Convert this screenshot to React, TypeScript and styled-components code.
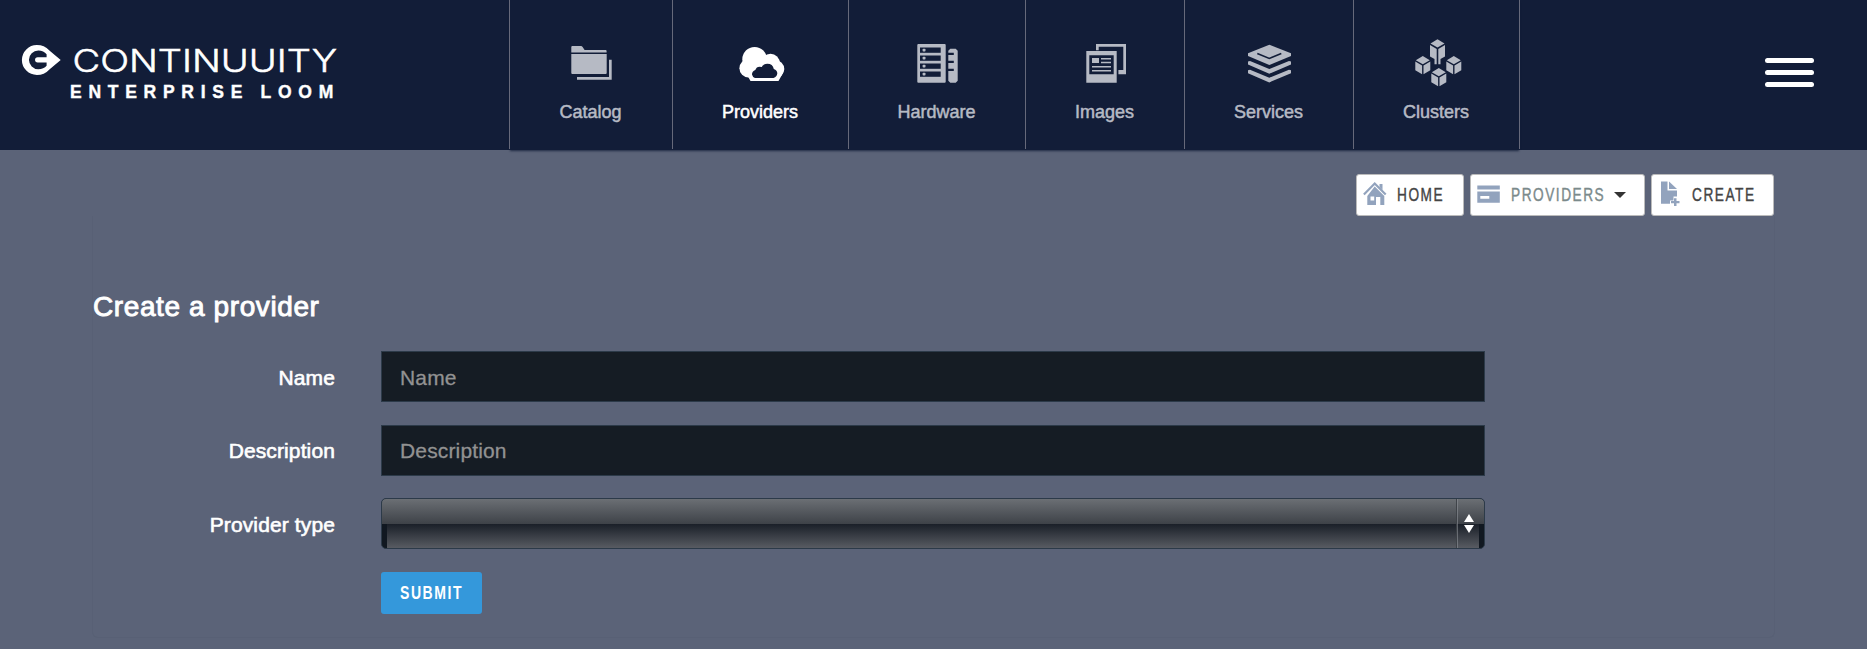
import React from "react";
import styled, { createGlobalStyle } from "styled-components";

const NAVY = "#121d38";

const GlobalStyle = createGlobalStyle`
  * { box-sizing: border-box; }
  body {
    margin: 0;
    background: #5b6378;
    font-family: "Liberation Sans", Arial, Helvetica, sans-serif;
    color: #fff;
  }
`;

const Page = styled.div`
  height: 649px;
  overflow: hidden;
`;

const Header = styled.header`
  display: flex;
  height: 150px;
  background: ${NAVY};
`;

const Brand = styled.a`
  flex: 0 0 509px;
  padding: 40px 0 0 20px;
`;

const Nav = styled.nav`
  display: flex;
  height: 150px;
  background: linear-gradient(#66697a, #66697a) no-repeat right top / 1px 149px;
  padding-right: 1px;
  box-shadow: 0 2px 2px -1px rgba(18, 29, 56, 0.8);
`;

const NavItem = styled.a<{ $width: number; $active?: boolean }>`
  width: ${(p) => p.$width}px;
  padding: 38px 0 0 1px;
  display: flex;
  flex-direction: column;
  align-items: center;
  background: linear-gradient(#66697a, #66697a) no-repeat left top / 1px 149px;
  color: ${(p) => (p.$active ? "#fff" : "#b6bac4")};
  font-size: 18px;
  line-height: 20px;
  -webkit-text-stroke: 0.5px currentColor;

  svg { display: block; margin-bottom: 14px; stroke-width: 0; }
`;

const NavLabel = styled.span`
  padding-right: 1px;
`;

const MenuButton = styled.button`
  margin: 57px 52px 0 auto;
  width: 50px;
  height: 32px;
  padding: 1px 0;
  border: 0;
  background: none;
  display: flex;
  flex-direction: column;
  gap: 7px;
`;

const MenuBar = styled.span`
  width: 49px;
  height: 5px;
  border-radius: 2.5px;
  background: #fff;
`;

const Crumbs = styled.div`
  display: flex;
  justify-content: flex-end;
  gap: 6px;
  padding: 24px 93px 0 0;
`;

const Crumb = styled.a<{ $width: number; $muted?: boolean }>`
  width: ${(p) => p.$width}px;
  height: 42px;
  padding-left: 6px;
  display: flex;
  align-items: center;
  background: #fff;
  border: 1px solid #bbb;
  border-radius: 3px;
  color: ${(p) => (p.$muted ? "#7b8a8b" : "#444")};
  font-size: 18px;

  svg { flex: none; margin-bottom: 4px; }
`;

const Condensed = styled.span<{ $width: number; $left?: number; $bold?: boolean }>`
  display: block;
  flex: none;
  width: ${(p) => p.$width}px;
  margin-left: ${(p) => p.$left ?? 0}px;
  white-space: nowrap;
  text-align: left;
  font-weight: ${(p) => (p.$bold ? 700 : 400)};
  letter-spacing: 2px;
  -webkit-text-stroke: ${(p) => (p.$bold ? 0 : 0.4)}px currentColor;
  transform: scaleX(${(p) => (p.$bold ? 0.78 : 0.76)});
  transform-origin: left center;
`;

const Caret = styled.span`
  margin-left: 11px;
  border: 6px solid transparent;
  border-top-color: #333;
  border-bottom: 0;
`;

const Panel = styled.main`
  margin: 0 92px;
  height: 422px;
  border: 1px solid #586075;
  border-top: 0;
  border-radius: 0 0 6px 6px;
  padding-top: 74px;
`;

const Title = styled.h1`
  margin: 0 0 27px;
  font-size: 28px;
  line-height: 34px;
  font-weight: 400;
  letter-spacing: 0.6px;
  -webkit-text-stroke: 0.9px #fff;
`;

const Field = styled.div<{ $after?: number }>`
  display: grid;
  grid-template-columns: 242px 1104px;
  column-gap: 46px;
  align-items: center;
  height: 51px;
  margin-bottom: ${(p) => p.$after ?? 23}px;
`;

const Label = styled.label<{ $top?: number }>`
  text-align: right;
  font-size: 21px;
  letter-spacing: 0.12px;
  -webkit-text-stroke: 0.6px #fff;
  padding-top: ${(p) => p.$top ?? 2}px;
`;

const Input = styled.input<{ $top?: number }>`
  width: 100%;
  height: 51px;
  padding: ${(p) => p.$top ?? 2}px 18px 0;
  border: 1px solid #2c3a49;
  background: #151c24;
  color: #fff;
  font: 21px "Liberation Sans", Arial, sans-serif;
  letter-spacing: 0.15px;
  outline: 0;

  &::placeholder {
    color: #929292;
    opacity: 1;
    -webkit-text-stroke: 0.3px #929292;
  }
`;

const SelectBox = styled.div`
  height: 51px;
  display: flex;
  justify-content: flex-end;
  border: 1px solid #2c3a49;
  border-radius: 5px;
  background:
    linear-gradient(#6b6f74, #3e4248) no-repeat 0 0 / 100% 25px,
    linear-gradient(#1a1f28, #585b62) no-repeat 5px 25px / 1092px 24px,
    #111821;
`;

const SelectArrows = styled.div`
  width: 28px;
  padding-right: 3px;
  border-left: 1px solid rgba(60, 64, 70, 0.9);
  box-shadow: inset 1px 0 0 rgba(140, 144, 150, 0.6);
  display: flex;
  flex-direction: column;
  align-items: center;
  justify-content: center;
  gap: 3px;
`;

const Arrow = styled.span<{ $up?: boolean }>`
  border: 5px solid transparent;
  ${(p) =>
    p.$up
      ? "border-bottom: 8px solid #fff; border-top: 0;"
      : "border-top: 8px solid #fff; border-bottom: 0;"}
`;

const Submit = styled.button`
  display: block;
  margin-left: 288px;
  width: 101px;
  height: 42px;
  padding: 0 0 0 19px;
  border: 0;
  border-radius: 3px;
  background: #3498db;
  color: #fff;
  font: 18px "Liberation Sans", Arial, sans-serif;
`;

const NavSvg = ({ children }: { children: React.ReactNode }) => (
  <svg width="50" height="50" viewBox="0 0 50 50" fill="currentColor">
    {children}
  </svg>
);

const CatalogIcon = () => (
  <NavSvg>
    <path d="M5.3 9q0-1 1-1H15q1 0 1.6 1l2 3h21q1 0 1 1v1.500H5.3zM5.3 16h35.4v19q0 1-1 1H6.3q-1 0-1-1z" />
    <path d="M43 21.7h2.7v20H11V39h32z" />
  </NavSvg>
);

const ProvidersIcon = () => (
  <NavSvg>
    <circle cx="18.6" cy="21.3" r="12.3" />
    <circle cx="12.6" cy="30.3" r="9.2" />
    <circle cx="34.5" cy="25" r="9.3" />
    <circle cx="39.3" cy="31" r="9" />
    <path d="M10 35l4.5 8h28L47 35l-6-10H16z" />
    <path
      fill={NAVY}
      d="M19 40h18.5q3.5-1.200 3.800-4.500 0-3.500-3.500-4.500-1-5.300-6.500-5.300-4 0-5.500 3.300-5-1.500-6.500 3-3.500 1.500-3.300 4.500.5 2.800 3 3.500z"
    />
  </NavSvg>
);

const HardwareIcon = () => (
  <NavSvg>
    <path d="M6.300 6h26.400q1 0 1 1v36.700q0 1-1 1H6.300q-1 0-1-1V7q0-1 1-1z" />
    {[9.5, 17.5, 25.5, 33.5].map((y) => (
      <g key={y}>
        <rect x="8" y={y} width="20.700" height="5.300" fill={NAVY} />
        <rect x="10.600" y={y + 1.2} width="2.900" height="2.900" rx=".8" />
      </g>
    ))}
    <path d="M38.300 10.700h5.400l2 2v30l-2 2h-5.400l-2-2V33h5.500v-2.200h-5.500V25h5.500v-2.200h-5.500V17h5.500v-2.200h-5.500v-2z" />
  </NavSvg>
);

const ImagesIcon = () => (
  <NavSvg>
    <path d="M16 6h30v30.300h-7.600V32h4.900V8.700H18.700v3.600H16z" />
    <path
      fillRule="evenodd"
      d="M6.300 13h30.400v31.700H6.300zM9.300 17.300v19h24.400v-19z"
    />
    <path d="M12 20h7v5h-7zM21 20h10v1.400H21zM21 23.800h10v1.400H21zM12 28h19v1.400H12zM12 32h19v1.400H12z" />
  </NavSvg>
);

const ServicesIcon = () => (
  <NavSvg>
    <path d="M25.300 6.700L47 15.300V18L25.300 27 4 18v-2.700z" />
    <path d="M13.300 15.500l12 5 12-5" fill="none" stroke={NAVY} style={{ strokeWidth: 1.6 }} />
    <path d="M4 23.500l2-.5 19.300 8L45 23l2 .5v3l-21.700 9.200L4 26.500z" />
    <path d="M4 32.200l2-.5 19.300 8L45 31.700l2 .5v3l-21.700 9.200L4 35.200z" />
  </NavSvg>
);

const Cube = ({ x, y }: { x: number; y: number }) => (
  <g transform={`translate(${x} ${y})`}>
    <path d="M0 0l7 4.200-7 4.100-7-4.100zM-7.500 5.500l6.800 4v8.700l-6.800-4zM7.500 5.500l-6.800 4v8.700l6.800-4z" />
  </g>
);

const ClustersIcon = () => (
  <NavSvg>
    <path d="M25.500 1.200l7 4.200-7 4.100-7-4.100z" />
    <path d="M18 7l6.700 4v15.300h-2.200v-5.300L18 18.500zM33 7l-6.700 4v15.300h2.200v-5.300l4.500-2.500z" />
    <Cube x={10.8} y={18} />
    <Cube x={41.8} y={18} />
    <Cube x={26.8} y={30} />
  </NavSvg>
);

const CrumbSvg = ({ children }: { children: React.ReactNode }) => (
  <svg width="24" height="25" viewBox="0 0 24 25" fill="#92a3bd">
    {children}
  </svg>
);

const HomeIcon = () => (
  <CrumbSvg>
    <path d="M.9 13.500L11.700 2.500l11 11" fill="none" stroke="#92a3bd" strokeWidth="2.200" />
    <path d="M16.500 3h3v6l-3-3z" />
    <path fillRule="evenodd" d="M11.700 5.500l9.600 9.500v9h-4v-8h-4.300v8H4.300v-9zM7.500 15.500v4h3.700v-4z" />
  </CrumbSvg>
);

const CardIcon = () => (
  <CrumbSvg>
    <path d="M.3 4.500h22.500v4H.3z" />
    <path fillRule="evenodd" d="M.3 10.500h22.500v11.200H.3zM3.300 15v2.800h9V15z" />
  </CrumbSvg>
);

const CreateIcon = () => (
  <CrumbSvg>
    <path d="M3 .5h6.500v9H19v6h-3.500v4H12v3.300H3z" />
    <path d="M11 .5l8 7.500h-8z" />
    <path d="M16 17.200h2.500v2.700h3v2.400h-3V25H16v-2.700h-3v-2.400h3z" />
  </CrumbSvg>
);

const Logo = () => (
  <svg width="330" height="62" viewBox="20 40 330 62" fill="#fff">
    <path d="M36.900 45c5 0 9 1.700 12.500 5.500l11.300 9.500-11.300 9.500C45.900 73.300 41.900 75 36.900 75a15 15 0 0 1 0-30z" />
    <path
      fill={NAVY}
      d="M38.300 50.500c3.500 0 6.500 1.500 8.300 3.800v11.400c-1.800 2.300-4.800 3.500-8.300 3.500a9.350 9.350 0 0 1 0-18.700z"
    />
    <path d="M37.700 57.200H50v5.300H37.700a2.650 2.650 0 0 1 0-5.300z" />
    <text
      x="72.500"
      y="72"
      fontFamily="Inter, sans-serif"
      fontSize="31"
      fontWeight="300"
      stroke="#fff"
      strokeWidth=".5"
      textLength="264.500"
      lengthAdjust="spacingAndGlyphs"
    >
      CONTINUUITY
    </text>
    <text
      x="70"
      y="97.500"
      fontFamily="Liberation Sans, Arial, sans-serif"
      fontSize="17.500"
      fontWeight="700"
      stroke="#fff"
      strokeWidth=".4"
      letterSpacing="6.720"
    >
      ENTERPRISE LOOM
    </text>
  </svg>
);

const NAV = [
  { label: "Catalog", width: 163, Icon: CatalogIcon },
  { label: "Providers", width: 176, Icon: ProvidersIcon, active: true },
  { label: "Hardware", width: 177, Icon: HardwareIcon },
  { label: "Images", width: 159, Icon: ImagesIcon },
  { label: "Services", width: 169, Icon: ServicesIcon },
  { label: "Clusters", width: 166, Icon: ClustersIcon },
];

export default function App() {
  return (
    <Page>
      <GlobalStyle />
      <Header>
        <Brand>
          <Logo />
        </Brand>
        <Nav>
          {NAV.map(({ label, width, Icon, active }) => (
            <NavItem key={label} $width={width} $active={active}>
              <Icon />
              <NavLabel>{label}</NavLabel>
            </NavItem>
          ))}
        </Nav>
        <MenuButton aria-label="Menu">
          <MenuBar />
          <MenuBar />
          <MenuBar />
        </MenuButton>
      </Header>
      <Crumbs>
        <Crumb $width={108}>
          <HomeIcon />
          <Condensed $width={48} $left={10}>HOME</Condensed>
        </Crumb>
        <Crumb $width={175} $muted>
          <CardIcon />
          <Condensed $width={92} $left={10}>PROVIDERS</Condensed>
          <Caret />
        </Crumb>
        <Crumb $width={123}>
          <CreateIcon />
          <Condensed $width={62} $left={10}>CREATE</Condensed>
        </Crumb>
      </Crumbs>
      <Panel>
        <Title>Create a provider</Title>
        <Field>
          <Label>Name</Label>
          <Input placeholder="Name" />
        </Field>
        <Field $after={22}>
          <Label $top={1}>Description</Label>
          <Input $top={0} placeholder="Description" />
        </Field>
        <Field>
          <Label>Provider type</Label>
          <SelectBox>
            <SelectArrows>
              <Arrow $up />
              <Arrow />
            </SelectArrows>
          </SelectBox>
        </Field>
        <Submit>
          <Condensed $width={62} $bold>SUBMIT</Condensed>
        </Submit>
      </Panel>
    </Page>
  );
}
